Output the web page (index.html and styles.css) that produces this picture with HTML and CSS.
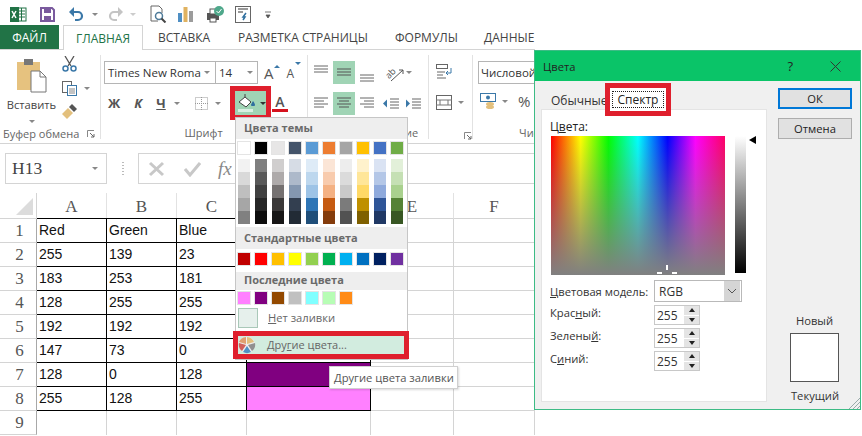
FILE: index.html
```html
<!DOCTYPE html>
<html lang="ru">
<head>
<meta charset="utf-8">
<title>Цвета</title>
<link rel="stylesheet" href="styles.css">
</head>
<body>
<div class="app">
  <div class="workbook">
    <div class="qat">
      <svg width="17" height="17" viewBox="0 0 17 17"><rect x="6" y="2" width="10" height="13" fill="#fff" stroke="#217346"/><path d="M9 5h6M9 8h6M9 11h6M11.500 2v13" stroke="#217346"/><rect x="0" y="1" width="9" height="15" fill="#217346"/><path d="M2 5l4 7M6 5l-4 7" stroke="#fff" stroke-width="1.500"/></svg>
      <svg width="15" height="15" viewBox="0 0 15 15"><path d="M1 1h11l2 2v11H1z" fill="#fff" stroke="#7a5a9e" stroke-width="2"/><rect x="4" y="1" width="7" height="5" fill="#7a5a9e"/><rect x="4" y="9" width="7" height="5" fill="#7a5a9e"/></svg>
      <svg width="16" height="16" viewBox="0 0 16 16"><path d="M3 6h7a4 4 0 0 1 0 8H7" fill="none" stroke="#3b78a8" stroke-width="2.200"/><path d="M6 1L1 6l5 5z" fill="#3b78a8"/></svg>
      <i class="caret"></i>
      <svg width="16" height="16" viewBox="0 0 16 16"><path d="M13 6H6a4 4 0 0 0 0 8h3" fill="none" stroke="#c4c4c4" stroke-width="2.200"/><path d="M10 1l5 5-5 5z" fill="#c4c4c4"/></svg>
      <i class="caret caret-light"></i>
      <svg width="17" height="18" viewBox="0 0 17 18"><path d="M1 1h8l3 3v4" fill="none" stroke="#666"/><path d="M1 1v15h7" fill="none" stroke="#666"/><circle cx="9" cy="11" r="3.500" fill="#fff" stroke="#4d7a99" stroke-width="1.500"/><path d="M11.500 13.500l4 4" stroke="#444" stroke-width="2"/></svg>
      <svg width="15" height="15" viewBox="0 0 15 15"><rect x="0" y="6" width="4" height="9" fill="#4f8fc4"/><rect x="5.500" y="0" width="4" height="15" fill="#e0b260"/><rect x="11" y="4" width="4" height="11" fill="#9c9c9c"/></svg>
      <svg width="17" height="17" viewBox="0 0 17 17"><rect x="0" y="7" width="12" height="7" fill="#555"/><rect x="3" y="3" width="6" height="5" fill="#fff" stroke="#555"/><rect x="3" y="12" width="6" height="4" fill="#fff" stroke="#555"/><circle cx="12" cy="5" r="5" fill="#4fa88b"/><path d="M9.500 5l2 2 3-4" fill="none" stroke="#fff"/></svg>
      <svg width="16" height="17" viewBox="0 0 16 17"><rect x="0.500" y="0.500" width="15" height="16" fill="#fff" stroke="#666"/><path d="M3 3h10M3 6h5" stroke="#999" stroke-width="2"/><path d="M11 7l-3 4h2l-2 3" fill="none" stroke="#2f6f9f" stroke-width="1.500"/></svg>
      <svg class="more" width="6" height="8" viewBox="0 0 6 8"><path d="M0 1h6M1 4h4l-2 3z" fill="#555" stroke="#555" stroke-width="0.800"/></svg>
    </div>

    <div class="tabs">
      <span class="tab-file">ФАЙЛ</span>
      <span class="tab-home">ГЛАВНАЯ</span>
      <span class="tab tab-insert">ВСТАВКА</span>
      <span class="tab tab-page">РАЗМЕТКА СТРАНИЦЫ</span>
      <span class="tab tab-formulas">ФОРМУЛЫ</span>
      <span class="tab">ДАННЫЕ</span>
    </div>

    <div class="ribbon">
      <section class="group group-clip">
        <div class="group-body clip">
          <div class="paste">
            <svg width="30" height="35" viewBox="0 0 30 35"><rect x="0" y="4" width="23" height="28" fill="#e6c27f"/><rect x="7" y="1" width="9" height="6" fill="#777"/><path d="M14 13h9l6 6v15H14z" fill="#fff" stroke="#777"/><path d="M23 13v6h6" fill="none" stroke="#777"/></svg>
            <span class="paste-label">Вставить</span>
            <i class="caret"></i>
          </div>
          <div class="clip-tools">
            <svg width="15" height="16" viewBox="0 0 15 16"><path d="M3 0l6 10M12 0L6 10" stroke="#555" stroke-width="1.300"/><circle cx="3.500" cy="12.500" r="2.500" fill="none" stroke="#3b78a8" stroke-width="1.500"/><circle cx="11.500" cy="12.500" r="2.500" fill="none" stroke="#3b78a8" stroke-width="1.500"/></svg>
            <span class="tool-caret"><svg width="15" height="15" viewBox="0 0 15 15"><rect x="0.500" y="0.500" width="9" height="11" fill="#fff" stroke="#666"/><rect x="5.500" y="4.500" width="9" height="10" fill="#fff" stroke="#3b78a8"/><path d="M7 8h6M7 10h6M7 12h6" stroke="#888"/></svg><i class="caret"></i></span>
            <svg class="brush" width="16" height="15" viewBox="0 0 16 15"><path d="M0 10l6-6 5 5-6 6z" fill="#e3c07d"/><path d="M7 3l3-3 5 5-3 3z" fill="#555"/></svg>
          </div>
        </div>
        <div class="group-label label-clip">Буфер обмена <svg class="launcher" width="8" height="8" viewBox="0 0 8 8"><path d="M0.500 7V0.500H7" fill="none" stroke="#888"/><path d="M3 3l4 4M7 4v3H4" fill="none" stroke="#666"/></svg></div>
      </section>

      <section class="group group-font">
        <div class="group-body font-body">
          <div class="font-row">
            <div class="combo">
              <span class="combo-name">Times New Roma<i class="caret"></i></span>
              <span class="combo-size">14<i class="caret"></i></span>
            </div>
            <span class="grow">A<i class="up"></i></span>
            <span class="shrink">A<i class="down"></i></span>
          </div>
          <div class="font-row font-row2">
            <b class="fmt fmt-b">Ж</b>
            <i class="fmt fmt-i">К</i>
            <span class="fmt fmt-u">Ч</span>
            <i class="caret"></i>
            <svg class="borders" width="13" height="13" viewBox="0 0 13 13"><rect x="0.500" y="0.500" width="12" height="12" fill="none" stroke="#999" stroke-dasharray="1 1"/><path d="M6.500 0v13M0 6.500h13" stroke="#999" stroke-dasharray="1 1"/></svg>
            <i class="caret"></i>
            <div class="fill-btn">
              <svg width="18" height="18" viewBox="0 0 18 18"><path d="M1 8l6-5 6 5-5 5z" fill="#fff" stroke="#444"/><path d="M7 3V0" stroke="#444"/><path d="M15 7c1.500 2 2 3 2 4s-1 1-2 1-2-0-2-1 1-2 2-4z" fill="#2f6f9f"/><rect x="0" y="15" width="15" height="3" fill="#d8f0e2"/></svg>
              <i class="caret caret-dark"></i>
            </div>
            <span class="font-color">A</span>
          </div>
        </div>
        <div class="group-label label-font">Шрифт</div>
      </section>

      <section class="group group-align">
        <div class="group-body align-body">
          <div class="align-row">
            <svg class="lines" width="22" height="23" viewBox="0 0 22 23"><path d="M4 5h14M4 8h14M4 11h14" stroke="#666"/></svg>
            <svg class="lines on" width="22" height="23" viewBox="0 0 22 23"><path d="M4 8h14M4 11h14M4 14h14" stroke="#555"/></svg>
            <svg class="lines" width="22" height="23" viewBox="0 0 22 23"><path d="M4 14h14M4 17h14M4 20h14" stroke="#666"/></svg>
            <svg class="orient orient-ab" width="22" height="18" viewBox="0 0 22 18"><text x="2" y="12" transform="rotate(-45 8 9)" class="ab">ab</text><path d="M8 17L20 6M16 6h4v4" fill="none" stroke="#555"/></svg>
            <i class="caret"></i>
          </div>
          <div class="align-row">
            <svg class="lines" width="22" height="23" viewBox="0 0 22 23"><path d="M4 6h14M4 9h10M4 12h14M4 15h10" stroke="#666"/></svg>
            <svg class="lines on" width="22" height="23" viewBox="0 0 22 23"><path d="M4 6h14M6 9h10M4 12h14M6 15h10" stroke="#555"/></svg>
            <svg class="lines" width="22" height="23" viewBox="0 0 22 23"><path d="M4 6h14M8 9h10M4 12h14M8 15h10" stroke="#666"/></svg>
            <svg class="orient" width="16" height="12" viewBox="0 0 16 12"><path d="M7 1h9M7 4h9M7 7h9M7 10h9" stroke="#666"/><path d="M0 5.500l4-4v8z" fill="#3b78a8"/></svg>
            <svg class="indent" width="16" height="12" viewBox="0 0 16 12"><path d="M7 1h9M7 4h9M7 7h9M7 10h9" stroke="#666"/><path d="M5 5.500l-4-4v8z" fill="#3b78a8"/></svg>
          </div>
        </div>
        <div class="group-label label-align">ие</div>
      </section>

      <section class="group group-wrap">
        <div class="group-body wrap-body">
          <svg width="16" height="15" viewBox="0 0 16 15"><rect x="0.500" y="0.500" width="11" height="4" fill="none" stroke="#666"/><path d="M1 8h8M1 11h6M1 14h9" stroke="#666"/><path d="M15 4v5h-4M12 7l-2 2 2 2" fill="none" stroke="#3b78a8"/></svg>
          <span class="tool-caret merge"><svg width="16" height="15" viewBox="0 0 16 15"><rect x="0.500" y="0.500" width="15" height="14" fill="none" stroke="#666"/><path d="M0 5h16M0 10h16M4 5v5M12 5v5" stroke="#777"/></svg><i class="caret"></i></span>
        </div>
        <div class="group-label label-launch"><svg width="8" height="8" viewBox="0 0 8 8"><path d="M0.500 7V0.500H7" fill="none" stroke="#888"/><path d="M3 3l4 4M7 4v3H4" fill="none" stroke="#666"/></svg></div>
      </section>

      <section class="group group-num">
        <div class="group-body num-body">
          <div class="num-combo">Числовой</div>
          <div class="num-row">
            <svg width="16" height="16" viewBox="0 0 16 16"><rect x="0.500" y="0.500" width="15" height="8" fill="#fff" stroke="#3b78a8"/><circle cx="8" cy="4.500" r="2" fill="#3b78a8"/><ellipse cx="10" cy="11" rx="4" ry="2" fill="#e3c07d"/><ellipse cx="10" cy="14" rx="4" ry="2" fill="#e3c07d"/></svg>
            <i class="caret"></i>
            <span class="pct">%</span>
          </div>
        </div>
        <div class="group-label label-num">Чис</div>
      </section>
    </div>

    <div class="formula-bar">
      <div class="name-box">H13<i class="caret"></i></div>
      <div class="bar-dots"></div>
      <div class="formula-box">
        <svg width="17" height="16" viewBox="0 0 17 16"><path d="M2 2l13 12M15 2L2 14" stroke="#c8c8c8" stroke-width="3"/></svg>
        <svg width="17" height="16" viewBox="0 0 17 16"><path d="M1 8l5 6L16 2" fill="none" stroke="#c8c8c8" stroke-width="3"/></svg>
        <span class="fx">fx</span>
      </div>
    </div>

    <div class="sheet">
      <div class="corner"><i></i></div>
      <div class="col">A</div><div class="col">B</div><div class="col">C</div><div class="col"></div><div class="col">E</div><div class="col">F</div>

      <div class="row">1</div><div class="c k">Red</div><div class="c k">Green</div><div class="c k">Blue</div><div class="c k"></div><div class="c"></div><div class="c"></div>
      <div class="row">2</div><div class="c k">255</div><div class="c k">139</div><div class="c k">23</div><div class="c k"></div><div class="c"></div><div class="c"></div>
      <div class="row">3</div><div class="c k">183</div><div class="c k">253</div><div class="c k">181</div><div class="c k"></div><div class="c"></div><div class="c"></div>
      <div class="row">4</div><div class="c k">128</div><div class="c k">255</div><div class="c k">255</div><div class="c k"></div><div class="c"></div><div class="c"></div>
      <div class="row">5</div><div class="c k">192</div><div class="c k">192</div><div class="c k">192</div><div class="c k"></div><div class="c"></div><div class="c"></div>
      <div class="row">6</div><div class="c k">147</div><div class="c k">73</div><div class="c k">0</div><div class="c k"></div><div class="c"></div><div class="c"></div>
      <div class="row">7</div><div class="c k">128</div><div class="c k">0</div><div class="c k">128</div><div class="c k purple"></div><div class="c"></div><div class="c"></div>
      <div class="row">8</div><div class="c k">255</div><div class="c k">128</div><div class="c k">255</div><div class="c k pink"></div><div class="c"></div><div class="c"></div>
      <div class="row">9</div><div class="c last"></div><div class="c last"></div><div class="c last"></div><div class="c last"></div><div class="c last"></div><div class="c last"></div>
    </div>
  </div>

  <div class="menu">
    <div class="menu-head head-theme">Цвета темы</div>
    <div class="swatches sw-theme">
      <i class="sw" style="background:#fff"></i><i class="sw" style="background:#000"></i><i class="sw" style="background:#e7e6e6"></i><i class="sw" style="background:#44546a"></i><i class="sw" style="background:#5b9bd5"></i><i class="sw" style="background:#ed7d31"></i><i class="sw" style="background:#a5a5a5"></i><i class="sw" style="background:#ffc000"></i><i class="sw" style="background:#4472c4"></i><i class="sw" style="background:#70ad47"></i>
    </div>
    <div class="shades">
      <i style="background:#f2f2f2"></i><i style="background:#d9d9d9"></i><i style="background:#bfbfbf"></i><i style="background:#a6a6a6"></i><i style="background:#808080"></i>
      <i style="background:#7f7f7f"></i><i style="background:#595959"></i><i style="background:#404040"></i><i style="background:#262626"></i><i style="background:#0d0d0d"></i>
      <i style="background:#d0cece"></i><i style="background:#aeaaaa"></i><i style="background:#757171"></i><i style="background:#3a3838"></i><i style="background:#171616"></i>
      <i style="background:#d6dce5"></i><i style="background:#adb9ca"></i><i style="background:#8497b0"></i><i style="background:#333f50"></i><i style="background:#222b35"></i>
      <i style="background:#deebf7"></i><i style="background:#bdd7ee"></i><i style="background:#9dc3e6"></i><i style="background:#2e75b6"></i><i style="background:#1f4e79"></i>
      <i style="background:#fbe5d6"></i><i style="background:#f8cbad"></i><i style="background:#f4b183"></i><i style="background:#c55a11"></i><i style="background:#843c0c"></i>
      <i style="background:#ededed"></i><i style="background:#dbdbdb"></i><i style="background:#c9c9c9"></i><i style="background:#7b7b7b"></i><i style="background:#525252"></i>
      <i style="background:#fff2cc"></i><i style="background:#ffe699"></i><i style="background:#ffd966"></i><i style="background:#bf9000"></i><i style="background:#7f6000"></i>
      <i style="background:#dae3f3"></i><i style="background:#b4c7e7"></i><i style="background:#8faadc"></i><i style="background:#2f5597"></i><i style="background:#203864"></i>
      <i style="background:#e2f0d9"></i><i style="background:#c5e0b4"></i><i style="background:#a9d18e"></i><i style="background:#548235"></i><i style="background:#385723"></i>
    </div>
    <div class="menu-head head-std">Стандартные цвета</div>
    <div class="swatches sw-std">
      <i class="sw" style="background:#c00000"></i><i class="sw" style="background:#ff0000"></i><i class="sw" style="background:#ffc000"></i><i class="sw" style="background:#ffff00"></i><i class="sw" style="background:#92d050"></i><i class="sw" style="background:#00b050"></i><i class="sw" style="background:#00b0f0"></i><i class="sw" style="background:#0070c0"></i><i class="sw" style="background:#002060"></i><i class="sw" style="background:#7030a0"></i>
    </div>
    <div class="menu-head head-recent">Последние цвета</div>
    <div class="swatches sw-recent">
      <i class="sw" style="background:#ff80ff"></i><i class="sw" style="background:#800080"></i><i class="sw" style="background:#934900"></i><i class="sw" style="background:#c0c0c0"></i><i class="sw" style="background:#80ffff"></i><i class="sw" style="background:#b7fdb5"></i><i class="sw" style="background:#ff8b17"></i>
    </div>
    <div class="no-fill"><i class="no-fill-box"></i><span><u>Н</u>ет заливки</span></div>
    <div class="more-colors">
      <svg width="18" height="18" viewBox="0 0 18 18"><circle cx="9" cy="9" r="8" fill="#eee"/><path d="M9 8V1a8 8 0 0 1 7 5z" fill="#e3c07d"/><path d="M8 8V1a8 8 0 0 0-7 5z" fill="#e0a070"/><path d="M8 9L1 7a8 8 0 0 0 3 8z" fill="#d0605a"/><path d="M9 10l-4 6a8 8 0 0 0 8 0z" fill="#4f8fc4"/><path d="M10 9l7-2a8 8 0 0 1-3 8z" fill="#909090"/></svg>
      <span>Дру<u>г</u>ие цвета...</span>
    </div>
  </div>

  <div class="tooltip">Другие цвета заливки</div>

  <div class="dialog">
    <div class="dlg-title">
      <span class="dlg-name">Цвета</span>
      <span class="dlg-help">?</span>
      <svg class="dlg-close" width="11" height="11" viewBox="0 0 11 11"><path d="M0.500 0.500l10 10M10.500 0.500l-10 10" stroke="#333"/></svg>
    </div>
    <div class="dlg-body">
      <div class="dlg-left">
        <div class="dlg-tabs">
          <span class="dlg-tab">Обычные</span>
          <span class="dlg-tab-on"><span>Спектр</span></span>
        </div>
        <div class="panel">
          <div class="panel-label">Ц<u>в</u>ета:</div>
          <div class="picker">
            <div class="spectrum"><i class="cross c1"></i><i class="cross c2"></i><i class="cross c3"></i></div>
            <div class="lum"></div>
            <i class="lum-arrow"></i>
          </div>
          <div class="form">
            <label class="form-model"><u>Ц</u>ветовая модель:</label>
            <div class="select"><span>RGB</span><svg class="select-btn" width="16" height="20" viewBox="0 0 16 20"><rect width="16" height="20" fill="#d5d5d5"/><path d="M4 8l4 4 4-4" fill="none" stroke="#555"/></svg></div>
            <label>Крас<u>н</u>ый:</label>
            <div class="spin"><span>255</span><i class="spin-btns"><b class="s-up"></b><b class="s-down"></b></i></div>
            <label>Зелены<u>й</u>:</label>
            <div class="spin"><span>255</span><i class="spin-btns"><b class="s-up"></b><b class="s-down"></b></i></div>
            <label>С<u>и</u>ний:</label>
            <div class="spin"><span>255</span><i class="spin-btns"><b class="s-up"></b><b class="s-down"></b></i></div>
          </div>
        </div>
      </div>
      <div class="dlg-right">
        <div class="btn btn-ok">ОК</div>
        <div class="btn">Отмена</div>
        <div class="new-label">Новый</div>
        <div class="preview"></div>
        <div class="cur-label">Текущий</div>
      </div>
    </div>
    <svg class="grip" width="11" height="11" viewBox="0 0 11 11"><path d="M0 11L11 0M4 11l7-7M8 11l3-3" stroke="#9aa"/></svg>
  </div>
</div>
</body>
</html>
```

FILE: styles.css
```css
* { box-sizing: border-box; }
html, body { margin: 0; padding: 0; background: #fff; }
body { font-family: "Open Sans", "Noto Sans", sans-serif; color: #444; }
.app { position: relative; width: 862px; height: 436px; overflow: hidden; background: #fff; }
.workbook { width: 535px; display: flex; flex-direction: column; }
i { font-style: normal; }

.caret { display: inline-block; flex: none; width: 0; height: 0; border-left: 3px solid transparent; border-right: 3px solid transparent; border-top: 3px solid #888; }
.caret-light { border-top-color: #ccc; }
.caret-dark { border-top-color: #333; }

/* quick access */
.qat { height: 25px; padding: 3px 0 0 10px; display: grid; grid-template-columns: 30px 28px 24px 16px 22px 20px 28px 29px 28px 30px 10px; align-items: center; justify-items: start; }
.more { margin-top: 1px; }

/* tabs */
.tabs { height: 25px; display: flex; align-items: stretch; font-size: 12px; line-height: 26px; color: #444; border-bottom: 1px solid #d4d4d4; }
.tab-file { width: 59px; background: #217346; color: #fff; text-align: center; }
.tab-home { width: 80px; margin-left: 4px; margin-bottom: -1px; text-align: center; color: #217346; background: #fff; border: 1px solid #d4d4d4; border-bottom: 0; }
.tab { white-space: nowrap; }
.tab-insert { margin-left: 15px; width: 80px; }
.tab-page { width: 157px; }
.tab-formulas { width: 89px; }

/* ribbon */
.ribbon { height: 94px; display: flex; border-bottom: 1px solid #d4d4d4; overflow: hidden; }
.group { position: relative; flex: none; display: flex; flex-direction: column; padding: 5px 0 0; }
.group::after { content: ""; position: absolute; right: 0; top: 5px; bottom: 4px; width: 1px; background: #e2e2e2; }
.group-body { flex: 1; min-height: 0; }
.group-label { height: 18px; font-size: 11px; line-height: 16px; color: #666; white-space: nowrap; }
.group-clip { width: 101px; }
.group-font { width: 207px; }
.group-align { width: 121px; }
.group-wrap { width: 44px; }
.group-num { width: 62px; }
.group-num::after { display: none; }

.clip { display: flex; }
.paste { width: 62px; display: flex; flex-direction: column; align-items: center; padding-top: 3px; padding-left: 1px; }
.paste-label { font-size: 11.2px; line-height: 16px; margin-top: 4px; white-space: nowrap; }
.paste .caret { margin-top: 7px; }
.clip-tools { display: flex; flex-direction: column; align-items: flex-start; gap: 9px; padding-top: 1px; }
.tool-caret { display: flex; align-items: center; gap: 7px; }
.brush { margin-top: -1px; }
.label-clip { padding-left: 3px; display: flex; align-items: center; gap: 8px; }
.label-font { text-align: center; padding-right: 2px; }

.font-body { padding: 6px 0 0 3px; display: flex; flex-direction: column; }
.font-row { display: flex; align-items: center; height: 23px; }
.combo { display: flex; flex: none; width: 154px; height: 23px; border: 1px solid #b5b5b5; font-size: 11.5px; line-height: 21px; color: #333; }
.combo-name { width: 111px; padding-left: 3px; border-right: 1px solid #b5b5b5; display: flex; align-items: center; justify-content: space-between; padding-right: 5px; white-space: nowrap; overflow: hidden; }
.combo-size { flex: 1; padding-left: 3px; padding-right: 4px; display: flex; align-items: center; justify-content: space-between; }
.grow, .shrink { position: relative; font-size: 14px; line-height: 16px; color: #555; }
.grow { margin-left: 6px; font-size: 15px; }
.shrink { margin-left: 13px; font-size: 12px; margin-top: 2px; }
.up, .down { position: absolute; top: 0; left: 100%; width: 0; height: 0; border-left: 3px solid transparent; border-right: 3px solid transparent; }
.up { border-bottom: 3px solid #3b78a8; }
.down { border-top: 3px solid #3b78a8; left: 8px; top: -4px; }
.font-row2 { height: 34px; margin-top: 2px; }
.fmt { font-size: 13px; width: 12px; text-align: center; color: #555; font-family: "Open Sans", sans-serif; }
.fmt-b { margin-left: 4px; }
.fmt-i { margin-left: 12px; font-weight: 700; font-style: italic; }
.fmt-u { margin-left: 11px; font-weight: 700; text-decoration: underline; }
.fmt-u + .caret { margin-left: 7px; }
.borders { margin-left: 15px; }
.borders + .caret { margin-left: 7px; }
.fill-btn { margin-left: 9px; width: 41px; height: 34px; flex: none; border: 5px solid #df1f2d; background: #a0d4b5; display: flex; align-items: center; gap: 4px; padding-left: 3px; }
.font-color { margin-left: 1px; font-size: 14px; line-height: 14px; font-weight: 600; color: #555; width: 16px; text-align: center; border-bottom: 3px solid #d5121e; }

.align-body { padding: 6px 0 0 2px; display: flex; flex-direction: column; gap: 8px; }
.align-row { display: flex; align-items: center; gap: 1px; height: 23px; }
.lines.on { background: #a0d4b5; }
.orient { margin-left: 4px; }
.orient-ab { overflow: visible; }
.indent { margin-left: 5px; }
.ab { font: 9px "Open Sans", sans-serif; fill: #555; }
.label-align { padding-left: 97px; }
.wrap-body { padding: 9px 0 0 7px; display: flex; flex-direction: column; gap: 16px; }
.merge { gap: 6px; }
.label-launch { padding-left: 35px; padding-top: 3px; }
.num-body { padding: 6px 0 0 5px; display: flex; flex-direction: column; }
.num-combo { width: 80px; height: 23px; border: 1px solid #b5b5b5; padding-left: 2px; font-size: 11.5px; line-height: 21px; color: #333; }
.num-row { display: flex; align-items: center; gap: 6px; margin-top: 9px; padding-left: 2px; }
.pct { margin-left: 4px; font-size: 15px; line-height: 16px; color: #555; }
.label-num { padding-left: 46px; }

/* formula bar */
.formula-bar { display: flex; align-items: stretch; height: 31px; margin-top: 9px; padding-left: 5px; }
.name-box { width: 102px; border: 1px solid #d4d4d4; display: flex; align-items: center; justify-content: space-between; padding: 0 8px 0 6px; font: 17.5px "Liberation Serif", serif; color: #444; }
.bar-dots { width: 2px; margin: 9px 0 8px 15px; background-image: linear-gradient(#bbb 50%, transparent 50%); background-size: 2px 3px; }
.formula-box { margin-left: 14px; flex: 1; border: 1px solid #d4d4d4; border-right: 0; display: flex; align-items: center; gap: 19px; padding-left: 9px; }
.fx { font: italic 19px "Liberation Serif", serif; color: #888; margin-left: -2px; }

/* sheet */
.sheet { display: grid; margin-top: 9px; grid-template-columns: 37px 70px 70px 70px 124px 83px 81px; grid-template-rows: 26px repeat(9, 24px); font-family: "Liberation Sans", sans-serif; font-size: 14px; color: #111; }
.corner { border-bottom: 1px solid #d4d4d4; border-right: 1px solid #d4d4d4; display: flex; align-items: flex-end; justify-content: flex-end; padding: 0 3px 3px 0; }
.corner i { width: 0; height: 0; border-left: 17px solid transparent; border-bottom: 17px solid #dcdcdc; }
.col { border-right: 1px solid #e2e2e2; border-bottom: 1px solid #d4d4d4; text-align: center; font: 17px/27px "Liberation Serif", serif; color: #555; }
.row { border-right: 1px solid #a8a8a8; border-bottom: 1px solid #d4d4d4; text-align: center; font: 17px/23px "Liberation Serif", serif; color: #555; padding-left: 3px; }
.c { border-right: 1px solid #d4d4d4; border-bottom: 1px solid #d4d4d4; padding-left: 2px; line-height: 23px; }
.c.k { border-right: 1px solid #000; border-bottom: 1px solid #000; }
.last { border-bottom: 0; }
.purple { background: #800080; }
.pink { background: #ff80ff; }
.sheet > :nth-child(n+8):nth-child(-n+13).k { box-shadow: 0 -1px 0 #000; }

/* dropdown */
.menu { position: absolute; left: 235px; top: 117px; width: 173px; height: 243px; background: #fff; border: 1px solid #c6c6c6; display: flex; flex-direction: column; }
.menu-head { height: 22px; background: #eee; padding-left: 8px; font-size: 11px; font-weight: 700; line-height: 22px; color: #6a6a6a; }
.head-theme { line-height: 20px; }
.swatches { display: flex; gap: 5px; padding-left: 2px; }
.sw { width: 12px; height: 12px; box-shadow: 0 0 0 1px #e4e4e4; }
.sw-theme { margin-top: 3px; }
.shades { display: grid; grid-auto-flow: column; grid-template-rows: repeat(5, 13px); grid-template-columns: repeat(10, 12px); column-gap: 5px; margin-top: 5px; padding-left: 2px; }
.head-std { margin-top: 3px; }
.sw-std { margin-top: 4px; }
.head-recent { margin-top: 7px; height: 18px; line-height: 15px; }
.sw-recent { margin-top: 2px; }
.no-fill { display: flex; align-items: center; height: 20px; margin-top: 4px; font-size: 11.2px; color: #666; padding-left: 2px; gap: 10px; }
.no-fill-box { width: 20px; height: 20px; background: #e6f0ec; border: 1px solid #a9c8b8; }
.more-colors { height: 29px; margin: 3px -2px 0 -3px; border: 5px solid #df1f2d; background: #d2ecdf; display: flex; align-items: center; gap: 11px; font-size: 11px; color: #666; }
.tooltip { position: absolute; left: 329px; top: 366px; width: 129px; height: 23px; background: #fff; border: 1px solid #d0d0d0; box-shadow: 1px 1px 2px rgba(0, 0, 0, .15); font-size: 11.2px; line-height: 22px; padding-left: 4px; color: #555; white-space: nowrap; }

/* dialog */
.dialog { position: absolute; left: 534px; top: 50px; width: 327px; height: 360px; background: #f0f0f0; border: 1px solid #3dbb85; font-size: 11.2px; color: #222; display: flex; flex-direction: column; }
.dlg-title { height: 30px; flex: none; background: #0ac468; display: flex; align-items: center; padding: 0 19px 0 8px; color: #222; }
.dlg-name { flex: 1; }
.dlg-help { margin-right: 37px; font-size: 13px; }
.dlg-body { flex: 1; display: flex; }
.dlg-left { width: 231px; padding-left: 7px; display: flex; flex-direction: column; }
.dlg-tabs { height: 29px; display: flex; align-items: flex-end; position: relative; z-index: 1; }
.dlg-tab { padding-left: 9px; width: 63px; font-size: 12px; line-height: 19px; white-space: nowrap; color: #333; }
.dlg-tab-on { margin-bottom: -6px; margin-top: 2px; width: 66px; height: 33px; border: 5px solid #df1f2d; background: #fff; padding: 3px 2px; font-size: 12px; }
.dlg-tab-on span { display: block; height: 17px; line-height: 15px; border: 1px dotted #222; text-align: center; }
.panel { flex: 1; margin-bottom: 8px; background: #fff; box-shadow: 0 0 0 1px #e4e4e4; padding: 8px 0 0 8px; display: flex; flex-direction: column; }
.panel-label { height: 18px; line-height: 17px; font-size: 12px; }
.picker { position: relative; display: flex; gap: 10px; height: 139px; padding-left: 1px; }
.spectrum { position: relative; width: 174px; height: 139px; background: linear-gradient(to bottom, rgba(128,128,128,0), #808080), linear-gradient(to right, #f00 0%, #ff0 17%, #0f0 33%, #0ff 50%, #00f 67%, #f0f 83%, #f06 100%); }
.cross { position: absolute; background: #fff; }
.c1 { left: 115px; top: 129px; width: 2px; height: 5px; }
.c2 { left: 106px; top: 136px; width: 5px; height: 2px; }
.c3 { left: 121px; top: 136px; width: 5px; height: 2px; }
.lum { width: 11px; height: 137px; background: linear-gradient(to bottom, #fff, #000); }
.lum-arrow { position: absolute; left: 199px; top: 0; width: 0; height: 0; border-top: 4px solid transparent; border-bottom: 4px solid transparent; border-right: 7px solid #000; }
.form { display: grid; grid-template-columns: 104px 88px; grid-template-rows: 22px 20px 20px 20px; row-gap: 3px; margin-top: 5px; }
.form label { line-height: 16px; color: #333; white-space: nowrap; }
.form .form-model { line-height: 23px; }
.select { border: 1px solid #b9b9b9; display: flex; align-items: center; justify-content: space-between; padding: 0 1px 0 4px; color: #333; font-size: 12px; }
.spin { width: 46px; border: 1px solid #c8c8c8; display: flex; align-items: center; justify-content: space-between; padding-left: 2px; color: #333; font-size: 12px; }
.spin-btns { width: 15px; height: 18px; display: flex; flex-direction: column; gap: 1px; background: #fff; }
.spin-btns b { flex: 1; display: flex; align-items: center; justify-content: center; background: #e4e4e4; }
.spin-btns b::after { content: ""; width: 0; height: 0; border-left: 3px solid transparent; border-right: 3px solid transparent; }
.s-up::after { border-bottom: 4px solid #222; }
.s-down::after { border-top: 4px solid #222; }
.dlg-right { flex: 1; padding: 7px 0 0 12px; display: flex; flex-direction: column; }
.btn { width: 74px; height: 21px; background: #e1e1e1; border: 1px solid #adadad; text-align: center; line-height: 19px; margin-bottom: 9px; color: #222; }
.btn-ok { border: 2px solid #0078d7; line-height: 17px; }
.new-label { margin-top: 164px; width: 74px; text-align: center; padding-right: 1px; line-height: 18px; color: #333; }
.preview { margin: 3px 0 0 12px; width: 49px; height: 49px; background: #fff; border: 1px solid #555; }
.cur-label { margin-top: 5px; width: 74px; text-align: center; line-height: 18px; color: #333; }
.grip { position: absolute; right: 0; bottom: 0; }
```
